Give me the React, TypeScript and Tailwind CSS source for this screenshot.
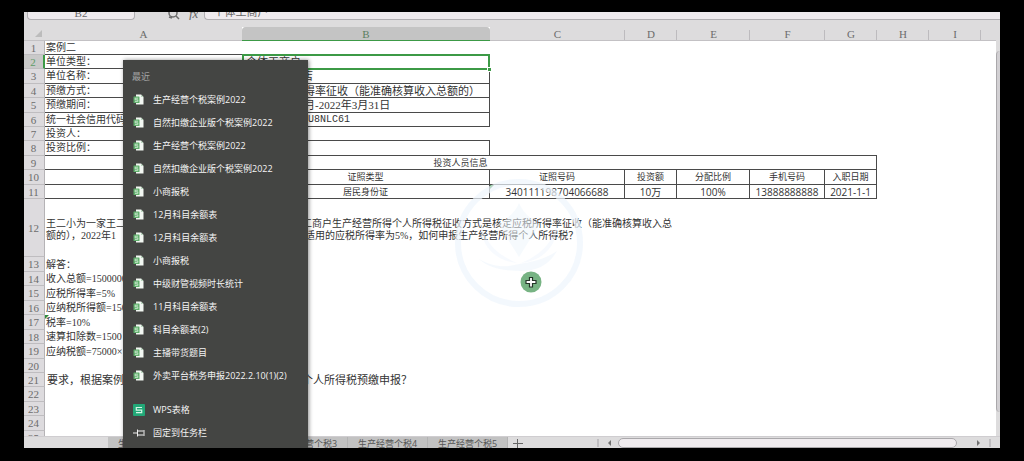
import type { ReactNode } from "react";
import { clsx } from "clsx";

const SHEET_FONT = "font-['Liberation_Serif','Noto_Sans_CJK_SC',serif]";
const UI_FONT = "font-['Open_Sans','Noto_Sans_CJK_SC',sans-serif]";

const COLUMNS = [
  { name: "A", width: "w-[197px]" },
  { name: "B", width: "w-[248px]" },
  { name: "C", width: "w-[135px]" },
  { name: "D", width: "w-[52px]" },
  { name: "E", width: "w-[73px]" },
  { name: "F", width: "w-[75px]" },
  { name: "G", width: "w-[52px]" },
  { name: "H", width: "w-[52px]" },
  { name: "I", width: "w-[52px]" },
];

const RECENT_FILES = [
  "生产经营个税案例2022",
  "自然扣缴企业版个税案例2022",
  "生产经营个税案例2022",
  "自然扣缴企业版个税案例2022",
  "小商报税",
  "12月科目余额表",
  "12月科目余额表",
  "小商报税",
  "中级财管视频时长统计",
  "11月科目余额表",
  "科目余额表(2)",
  "主播带货题目",
  "外卖平台税务申报2022.2.10(1)(2)",
];

const SHEET_TABS = ["生产经营个税1", "生产经营个税2", "生产经营个税3", "生产经营个税4", "生产经营个税5"];

interface RowProps {
  n: number;
  height?: string;
  active?: boolean;
  children?: ReactNode;
}

function Row({ n, height = "h-[14px]", active = false, children }: RowProps) {
  return (
    <tr className={height}>
      <th
        scope="row"
        className={clsx(
          "border-b border-b-[#bfbdc0] border-r p-0 pr-px text-center text-[11px] font-normal",
          active ? "border-r-2 border-r-[#3c9a46] bg-[#c9c9c9] text-[#5d9a66]" : "border-r-[#b5b3b6] bg-[#dddbde] text-[#6c6c6c]",
        )}
      >
        {n}
      </th>
      {children}
    </tr>
  );
}

interface CellProps {
  span?: number;
  className?: string;
  children?: ReactNode;
}

function Cell({ span, className, children }: CellProps) {
  return (
    <td colSpan={span} className={clsx("whitespace-nowrap p-0", className)}>
      {children}
    </td>
  );
}

const BOXED = "border-b border-r border-[#4a4a4a]";
const LABEL = "border-b border-[#4a4a4a] pl-px text-[10px]";
const PLAIN = "pl-px text-[10px]";
const CENTER_CJK = clsx(BOXED, UI_FONT, "text-center text-[9px]");
const CENTER_NUM = clsx(BOXED, UI_FONT, "text-center text-[10px]");

function CommentMark() {
  return <span className="absolute left-0 top-0 border-r-4 border-t-4 border-r-transparent border-t-[#2f8a3c]" />;
}

function Toolbar() {
  return (
    <div className={clsx("flex h-[15px] shrink-0 items-start bg-[#dddcdd] text-[#666]", SHEET_FONT)}>
      <div className="ml-[3px] flex h-2 w-[108px] items-end overflow-hidden rounded-b border border-t-0 border-[#b1afb2] bg-[#efebee]">
        <input
          aria-label="名称框"
          defaultValue="B2"
          className="h-3 w-full min-w-0 bg-transparent text-center text-[11px] leading-3 outline-none"
        />
      </div>
      <div className="ml-8 flex h-2 items-end gap-2 overflow-hidden">
        <svg viewBox="0 0 14 12" className="h-3 w-[14px]" fill="none" stroke="#6b6b6b" strokeWidth="1.5">
          <circle cx="6" cy="5" r="4" />
          <path d="M9 8l3 3M2 9l3 1" />
        </svg>
        <span className="h-3 text-[13px] italic leading-[11px]">fx</span>
      </div>
      <div className="ml-[6px] flex h-2 flex-1 items-end overflow-hidden rounded-bl border border-r-0 border-t-0 border-[#b1afb2] bg-[#efebee]">
        <input
          aria-label="编辑栏"
          defaultValue="个体工商户"
          className="h-[14px] w-full min-w-0 bg-transparent pl-2 text-[11px] leading-[14px] outline-none"
        />
      </div>
    </div>
  );
}

function Sheet() {
  return (
    <table className={clsx("w-full table-fixed border-separate border-spacing-0 leading-[12px] text-[#333]", SHEET_FONT)}>
      <colgroup>
        <col className="w-[21px]" />
        {COLUMNS.map((c) => (
          <col key={c.name} className={c.width} />
        ))}
        <col />
      </colgroup>
      <thead>
        <tr className="h-[14px] bg-[#dddcdd]">
          <td className="border-b border-[#c3c1c4] p-0">
            <span className="ml-[11px] block h-[7px] w-[7px] bg-[#bcbcbc] [clip-path:polygon(100%_0,100%_100%,0_100%)]" />
          </td>
          {COLUMNS.map((c) => (
            <th
              key={c.name}
              scope="col"
              className={clsx(
                "border-b p-0 text-[11px] font-normal",
                c.name === "B" ? "rounded-t-sm border-[#3c9a46] bg-[#c4c4c4] text-[#5b7f60]" : "border-[#c3c1c4] text-[#6c6c6c]",
                c.name !== "A" && c.name !== "B" && "bg-[linear-gradient(#bdbbbe,#bdbbbe)] bg-[length:1px_10px] bg-right-bottom bg-no-repeat",
              )}
            >
              {c.name}
            </th>
          ))}
          <td className="border-b border-[#c3c1c4] p-0" />
        </tr>
      </thead>
      <tbody>
        <Row n={1}>
          <Cell className={LABEL}>案例二</Cell>
          <Cell className="border-b border-[#4a4a4a]" />
        </Row>
        <Row n={2} active>
          <Cell className={LABEL}>单位类型：</Cell>
          <Cell className="relative pl-1 text-[11px]">
            个体工商户
            <span className="absolute -bottom-px -top-px left-0 right-0 border-2 border-[#3c9a46]" />
            <span className="absolute -bottom-[3px] -right-[2px] h-[5px] w-[5px] border border-white bg-[#3c9a46]" />
          </Cell>
        </Row>
        <Row n={3} height="h-[15px]">
          <Cell className={LABEL}>单位名称：</Cell>
          <Cell className={clsx(BOXED, "pl-[60px] text-[11px]")}>店</Cell>
        </Row>
        <Row n={4}>
          <Cell className={LABEL}>预缴方式：</Cell>
          <Cell className={clsx(BOXED, "pl-[62px] text-[11px]")}>得率征收（能准确核算收入总额的）</Cell>
        </Row>
        <Row n={5} height="h-[15px]">
          <Cell className={LABEL}>预缴期间：</Cell>
          <Cell className={clsx(BOXED, "pl-[62px] text-[11px]")}>月-2022年3月31日</Cell>
        </Row>
        <Row n={6}>
          <Cell className={LABEL}>统一社会信用代码：</Cell>
          <Cell className={clsx(BOXED, "pl-[66px] font-['Liberation_Mono',monospace] text-[10px]")}>U8NLC61</Cell>
        </Row>
        <Row n={7}>
          <Cell className={LABEL}>投资人：</Cell>
          <Cell className="border-b border-[#4a4a4a]" />
        </Row>
        <Row n={8} height="h-[15px]">
          <Cell className={LABEL}>投资比例：</Cell>
          <Cell className={BOXED} />
          <Cell span={5} className="border-b border-[#4a4a4a]" />
        </Row>
        <Row n={9}>
          <Cell span={7} className={CENTER_CJK}>
            投资人员信息
          </Cell>
        </Row>
        <Row n={10} height="h-[15px]">
          <Cell className={BOXED} />
          <Cell className={CENTER_CJK}>证照类型</Cell>
          <Cell className={CENTER_CJK}>证照号码</Cell>
          <Cell className={CENTER_CJK}>投资额</Cell>
          <Cell className={CENTER_CJK}>分配比例</Cell>
          <Cell className={CENTER_CJK}>手机号码</Cell>
          <Cell className={CENTER_CJK}>入职日期</Cell>
        </Row>
        <Row n={11}>
          <Cell className={BOXED} />
          <Cell className={CENTER_CJK}>居民身份证</Cell>
          <Cell className={clsx(CENTER_NUM, "relative")}>
            <CommentMark />
            340111198704066688
          </Cell>
          <Cell className={CENTER_NUM}>10万</Cell>
          <Cell className={CENTER_NUM}>100%</Cell>
          <Cell className={CENTER_NUM}>13888888888</Cell>
          <Cell className={CENTER_NUM}>2021-1-1</Cell>
        </Row>
        <Row n={12} height="h-[58px]">
          <Cell span={4} className={clsx(PLAIN, "pt-[3px]")}>
            <p className="flex">
              <span className="w-[256px] shrink-0">王二小为一家王二</span>
              <span>工商户生产经营所得个人所得税征收方式是核定应税所得率征收（能准确核算收入总</span>
            </p>
            <p className="flex">
              <span className="w-[259px] shrink-0">额的），2022年1</span>
              <span>适用的应税所得率为5%，如何申报生产经营所得个人所得税？</span>
            </p>
          </Cell>
        </Row>
        <Row n={13} height="h-[15px]">
          <Cell className={PLAIN}>解答：</Cell>
        </Row>
        <Row n={14}>
          <Cell className={PLAIN}>收入总额=1500000</Cell>
        </Row>
        <Row n={15} height="h-[15px]">
          <Cell className={PLAIN}>应税所得率=5%</Cell>
        </Row>
        <Row n={16}>
          <Cell className={PLAIN}>应纳税所得额=1500000</Cell>
        </Row>
        <Row n={17} height="h-[15px]">
          <Cell className={clsx(PLAIN, "relative")}>
            <CommentMark />
            税率=10%
          </Cell>
        </Row>
        <Row n={18}>
          <Cell className={PLAIN}>速算扣除数=1500</Cell>
        </Row>
        <Row n={19} height="h-[15px]">
          <Cell className={PLAIN}>应纳税额=75000×</Cell>
        </Row>
        <Row n={20} />
        <Row n={21}>
          <Cell className="pl-[2px] text-[11px]">要求，根据案例</Cell>
          <Cell className="pl-[60px] text-[11px]">个人所得税预缴申报？</Cell>
        </Row>
        <Row n={22} height="h-[15px]" />
        <Row n={23} />
        <Row n={24} height="h-[15px]" />
        <Row n={25} />
      </tbody>
    </table>
  );
}

function BottomBar() {
  return (
    <div className={clsx("flex h-3 shrink-0 overflow-hidden border-t border-[#cfcdd0] bg-[#dddcdd] text-[9px] text-[#555]", UI_FONT)}>
      <div className="w-[84px] shrink-0" />
      {SHEET_TABS.map((tab) => (
        <button
          key={tab}
          type="button"
          className="h-[14px] w-20 shrink-0 whitespace-nowrap border-r border-[#b3b3b3] bg-[#c2c2c2] text-center leading-[14px]"
        >
          {tab}
        </button>
      ))}
      <button type="button" aria-label="新建工作表" className="ml-[3px] h-3 w-4 shrink-0">
        <svg viewBox="0 0 16 12" className="h-3 w-4" stroke="#666" fill="none">
          <path d="M2 6.500h10M6.500 2v9" />
        </svg>
      </button>
      <div className="flex flex-1 items-center pl-[70px] pr-[9px]">
        <span className="h-2 w-[2px] bg-[#c0bec1]" />
        <span className="ml-[9px] border-y-[3px] border-r-[3px] border-y-transparent border-r-[#707070]" />
        <div className="mx-[7px] h-[10px] flex-1 pr-[13px]">
          <div className="h-[10px] rounded-full border border-[#aaa8ab] bg-[#efebee]" />
        </div>
        <span className="border-y-[3px] border-l-[3px] border-y-transparent border-l-[#707070]" />
        <span className="ml-[9px] h-2 w-[2px] bg-[#c0bec1]" />
      </div>
    </div>
  );
}

function FileIcon() {
  return (
    <svg aria-hidden="true" viewBox="0 0 12 12" className="h-3 w-3">
      <path d="M3 .5h5L10.500 3v7.500H3z" fill="#f2f7f2" />
      <path d="M8 .5V3h2.500" fill="#b9d5bd" />
      <rect x=".5" y="2.500" width="6" height="6.500" rx=".5" fill="#5fae6b" />
      <path d="M5 4.200H2.200v1.600h2.600v1.600H2" fill="none" stroke="#d8eeda" strokeWidth=".8" />
    </svg>
  );
}

function WpsIcon() {
  return (
    <svg aria-hidden="true" viewBox="0 0 12 12" className="h-3 w-3">
      <rect width="12" height="12" rx="1" fill="#22a877" />
      <path d="M9 3.500H3.300v2.600h5.400v2.600H3" fill="none" stroke="#d6f5e6" strokeWidth="1.200" />
    </svg>
  );
}

function PinIcon() {
  return (
    <svg aria-hidden="true" viewBox="0 0 12 12" className="h-3 w-3" fill="none" stroke="#f0f0f0">
      <path d="M0 6h4M4.500 2.500v7M4.500 4h6M4.500 8h6M11 3v6" />
    </svg>
  );
}

function MenuItem({ icon, children }: { icon: ReactNode; children: ReactNode }) {
  return (
    <button
      type="button"
      role="menuitem"
      className="flex h-[23px] w-full shrink-0 items-center gap-2 whitespace-nowrap pl-[10px] text-left text-[9px] text-[#f4f4f4] hover:bg-white/10"
    >
      {icon}
      {children}
    </button>
  );
}

function JumpList() {
  return (
    <div
      role="menu"
      className={clsx(
        "absolute bottom-0 left-[99px] top-12 flex w-[185px] flex-col overflow-hidden bg-[#444543] pt-[6px] shadow-[1px_0_4px_rgba(0,0,0,0.45)]",
        UI_FONT,
      )}
    >
      <div className="flex h-[22px] shrink-0 items-center pl-[9px] text-[9px] text-[#a5a5a5]">最近</div>
      {RECENT_FILES.map((name, i) => (
        <MenuItem key={i} icon={<FileIcon />}>
          {name}
        </MenuItem>
      ))}
      <div className="h-[11px] shrink-0" />
      <MenuItem icon={<WpsIcon />}>WPS表格</MenuItem>
      <MenuItem icon={<PinIcon />}>固定到任务栏</MenuItem>
    </div>
  );
}

function Watermark() {
  return (
    <svg aria-hidden="true" viewBox="0 0 128 128" className="pointer-events-none absolute left-[431px] top-[167px] h-32 w-32">
      <circle cx="64" cy="64" r="61" fill="none" stroke="#eef5fc" strokeWidth="6" opacity=".7" />
      <path d="M64 24c5 12 13 15 20 22L64 78 44 46c7-7 15-10 20-22z" fill="#eef5fc" opacity=".55" />
      <path d="M26 42c2 20 16 34 36 42-22-2-38-18-36-42zM102 42c-2 20-16 34-36 42 22-2 38-18 36-42z" fill="#eef5fc" opacity=".45" />
      <path d="M24 80c14 8 26 9 40 5 14-2 26-5 38-13-8 14-20 20-36 20-18 0-32-3-42-12z" fill="#eef5fc" opacity=".6" />
    </svg>
  );
}

function Pointer() {
  return (
    <svg aria-hidden="true" viewBox="0 0 22 22" className="pointer-events-none absolute left-[496px] top-[259px] h-[22px] w-[22px]">
      <circle cx="11" cy="11" r="10.500" fill="#77b383" />
      <path d="M9.500 6.500h3v3h3.500v3h-3.500v3.500h-3v-3.500H6v-3h3.500z" fill="#fff" stroke="#243528" strokeWidth="1.200" />
    </svg>
  );
}

export default function App() {
  return (
    <div className="flex h-screen flex-col bg-black px-6 pb-[13px] pt-3">
      <main className="relative flex min-h-0 flex-1 flex-col overflow-hidden bg-white">
        <Toolbar />
        <div className="flex min-h-0 flex-1">
          <div className="min-w-0 flex-1 overflow-hidden">
            <Sheet />
          </div>
          <div className="w-1 shrink-0 bg-[#dddcdd] pb-6 pt-6">
            <div className="h-full rounded-l border-l border-[#aaa8ab] bg-[#d2d0d3]" />
          </div>
        </div>
        <BottomBar />
        <Watermark />
        <Pointer />
        <JumpList />
      </main>
    </div>
  );
}
